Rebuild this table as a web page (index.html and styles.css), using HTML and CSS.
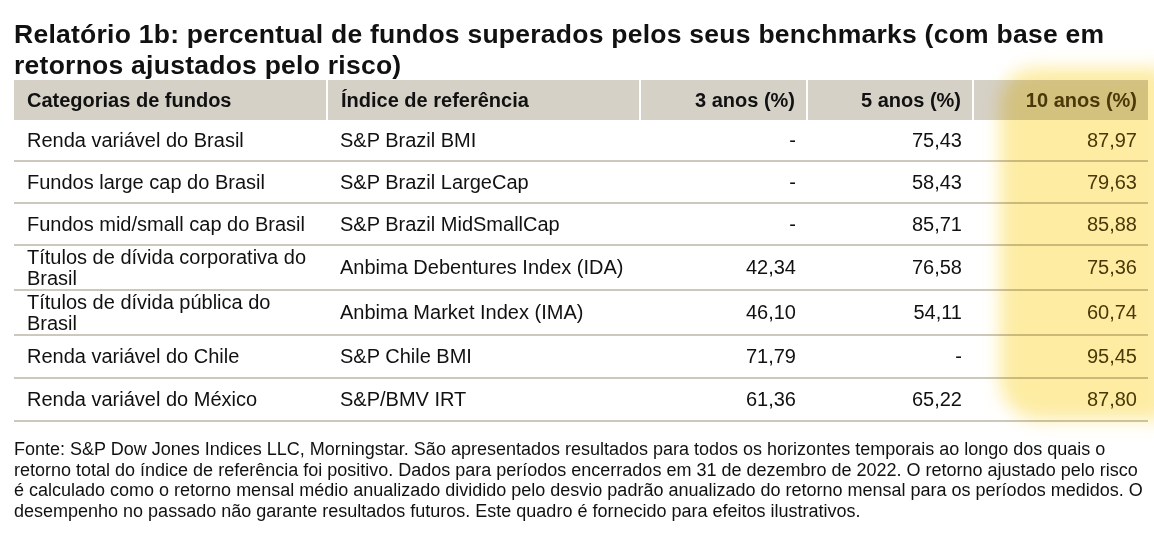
FILE: index.html
```html
<!DOCTYPE html>
<html lang="pt">
<head>
<meta charset="utf-8">
<link rel="stylesheet" href="styles.css">
</head>
<body>
<div class="page">
  <h1 class="title">Relatório 1b: percentual de fundos superados pelos seus benchmarks (com base em retornos ajustados pelo risco)</h1>
  <div class="table-wrap">
    <table class="data">
      <colgroup>
        <col class="c1"><col class="c2"><col class="c3"><col class="c4"><col class="c5">
      </colgroup>
      <thead>
        <tr>
          <th>Categorias de fundos</th>
          <th>Índice de referência</th>
          <th class="num">3 anos (%)</th>
          <th class="num">5 anos (%)</th>
          <th class="num hl">10 anos (%)</th>
        </tr>
      </thead>
      <tbody>
        <tr><td>Renda variável do Brasil</td><td>S&amp;P Brazil BMI</td><td class="num">-</td><td class="num">75,43</td><td class="num hl">87,97</td></tr>
        <tr><td>Fundos large cap do Brasil</td><td>S&amp;P Brazil LargeCap</td><td class="num">-</td><td class="num">58,43</td><td class="num hl">79,63</td></tr>
        <tr><td>Fundos mid/small cap do Brasil</td><td>S&amp;P Brazil MidSmallCap</td><td class="num">-</td><td class="num">85,71</td><td class="num hl">85,88</td></tr>
        <tr class="tall"><td>Títulos de dívida corporativa do Brasil</td><td>Anbima Debentures Index (IDA)</td><td class="num">42,34</td><td class="num">76,58</td><td class="num hl">75,36</td></tr>
        <tr class="tall"><td>Títulos de dívida pública do Brasil</td><td>Anbima Market Index (IMA)</td><td class="num">46,10</td><td class="num">54,11</td><td class="num hl">60,74</td></tr>
        <tr class="mid"><td>Renda variável do Chile</td><td>S&amp;P Chile BMI</td><td class="num">71,79</td><td class="num">-</td><td class="num hl">95,45</td></tr>
        <tr class="mid"><td>Renda variável do México</td><td>S&amp;P/BMV IRT</td><td class="num">61,36</td><td class="num">65,22</td><td class="num hl">87,80</td></tr>
      </tbody>
    </table>
    <div class="highlight"></div>
  </div>
  <p class="note">Fonte: S&amp;P Dow Jones Indices LLC, Morningstar. São apresentados resultados para todos os horizontes temporais ao longo dos quais o retorno total do índice de referência foi positivo. Dados para períodos encerrados em 31 de dezembro de 2022. O retorno ajustado pelo risco é calculado como o retorno mensal médio anualizado dividido pelo desvio padrão anualizado do retorno mensal para os períodos medidos. O desempenho no passado não garante resultados futuros. Este quadro é fornecido para efeitos ilustrativos.</p>
</div>
</body>
</html>
```

FILE: styles.css
```css
html, body {
  margin: 0;
  padding: 0;
  background: #ffffff;
}
body {
  font-family: "Liberation Sans", Arial, sans-serif;
  color: #111111;
}
.page {
  padding: 19px 4px 0 14px;
}
.title {
  margin: 0;
  font-size: 26.5px;
  line-height: 30.5px;
  letter-spacing: 0.25px;
  font-weight: 700;
  color: #111;
  width: 1136px;
}
.table-wrap {
  position: relative;
  width: 1134px;
}
.data {
  border-collapse: collapse;
  width: 1134px;
  table-layout: fixed;
  font-size: 20px;
}
.c1 { width: 313px; }
.c2 { width: 313px; }
.c3 { width: 167px; }
.c4 { width: 166px; }
.c5 { width: 175px; }
.data th {
  background: #d5d1c7;
  font-weight: 700;
  text-align: left;
  height: 40px;
  padding: 0 11px 0 13px;
  border-left: 2px solid #ffffff;
  color: #111;
}
.data th:first-child { border-left: none; }
.data td {
  height: 40px;
  padding: 0 11px 0 13px;
  border-bottom: 2px solid #cdc8bd;
  line-height: 21px;
  color: #111;
}
.data tr.tall td {
  height: 43px;
}
.data tr.mid td {
  height: 41px;
}
.data .num {
  text-align: right;
}
.data td.hl, .data th.hl {
  color: #4a3d0c;
}
.highlight {
  position: absolute;
  left: 986px;
  top: -12px;
  width: 166px;
  height: 352px;
  background: rgba(252, 224, 100, 0.6);
  border-radius: 36px 0 0 40px;
  filter: blur(9px);
  mix-blend-mode: multiply;
  pointer-events: none;
}
.note {
  margin: 17px 0 0;
  font-size: 18px;
  line-height: 20.7px;
  color: #111;
  width: 1136px;
}
```
